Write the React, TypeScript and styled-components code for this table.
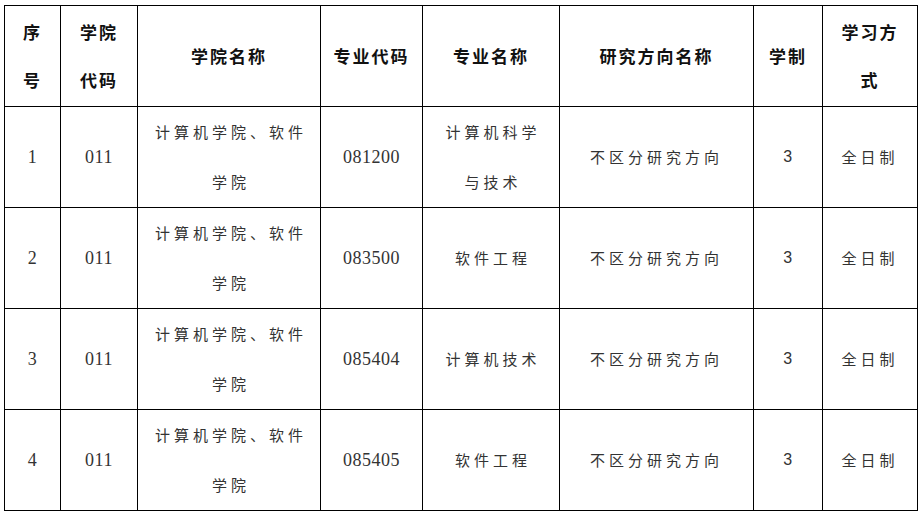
import React from 'react'
import styled, { createGlobalStyle } from 'styled-components';

const GlobalStyle = createGlobalStyle`
    html, body {
        margin: 0;
        padding: 0;
        background: #ffffff;
    }
`

type rowType = {
    no: string;
    code: string;
    college: string[];
    majorCode: string;
    major: string[];
    direction: string;
    years: string;
    mode: string;
}

const columns: { title: string[]; width: number }[] = [
    { title: ["序", "号"], width: 56 },
    { title: ["学院", "代码"], width: 77 },
    { title: ["学院名称"], width: 183 },
    { title: ["专业代码"], width: 102 },
    { title: ["专业名称"], width: 137 },
    { title: ["研究方向名称"], width: 194 },
    { title: ["学制"], width: 69 },
    { title: ["学习方", "式"], width: 95 },
]

const rows: rowType[] = [
    { no: "1", code: "011", college: ["计算机学院、软件", "学院"], majorCode: "081200", major: ["计算机科学", "与技术"], direction: "不区分研究方向", years: "3", mode: "全日制" },
    { no: "2", code: "011", college: ["计算机学院、软件", "学院"], majorCode: "083500", major: ["软件工程"], direction: "不区分研究方向", years: "3", mode: "全日制" },
    { no: "3", code: "011", college: ["计算机学院、软件", "学院"], majorCode: "085404", major: ["计算机技术"], direction: "不区分研究方向", years: "3", mode: "全日制" },
    { no: "4", code: "011", college: ["计算机学院、软件", "学院"], majorCode: "085405", major: ["软件工程"], direction: "不区分研究方向", years: "3", mode: "全日制" },
]

const Lines = ({ lines }: { lines: string[] }) => (
    <>
        {lines.map((l, i) => <Line key={i}>{l}</Line>)}
    </>
)

const App = () => {
    return (<>
        <GlobalStyle />
        <Page>
            <Table>
                <colgroup>
                    {columns.map((c, i) => <Col key={i} $w={c.width} />)}
                </colgroup>
                <thead>
                    <tr>
                        {columns.map((c, i) => (
                            <HeadCell key={i}><Lines lines={c.title} /></HeadCell>
                        ))}
                    </tr>
                </thead>
                <tbody>
                    {rows.map((r) => (
                        <tr key={r.no}>
                            <Cell $kind="digit">{r.no}</Cell>
                            <Cell $kind="digit">{r.code}</Cell>
                            <Cell><Lines lines={r.college} /></Cell>
                            <Cell $kind="digit">{r.majorCode}</Cell>
                            <Cell><Lines lines={r.major} /></Cell>
                            <Cell>{r.direction}</Cell>
                            <Cell $kind="sans">{r.years}</Cell>
                            <Cell>{r.mode}</Cell>
                        </tr>
                    ))}
                </tbody>
            </Table>
        </Page>
    </>
    )
}

export default App;


const Page = styled.div`
    padding: 5px 4px;
    width: 913px;
`

const Table = styled.table`
    border-collapse: collapse;
    table-layout: fixed;
    width: 913px;
`

const Col = styled.col<{ $w: number }>`
    width: ${({ $w }) => $w}px;
`

const Line = styled.span`
    display: block;
`

const HeadCell = styled.th`
    border: 1px solid #000;
    height: 100px;
    padding: 0;
    text-align: center;
    vertical-align: middle;
    font-family: "Noto Sans CJK SC", sans-serif;
    font-size: 17px;
    font-weight: 700;
    letter-spacing: 2px;
    line-height: 48px;
    color: #111;
`

type cellProp = {
    $kind?: "digit" | "sans"
}

const Cell = styled.td<cellProp>`
    border: 1px solid #000;
    height: 100px;
    padding: 0;
    text-align: center;
    vertical-align: middle;
    font-family: ${({ $kind }) =>
        $kind === "digit" ? `"Liberation Serif", serif`
            : $kind === "sans" ? `"Liberation Sans", sans-serif`
                : `"Noto Sans CJK SC", sans-serif`};
    font-size: ${({ $kind }) => $kind === "digit" ? "18px" : $kind === "sans" ? "16px" : "15px"};
    letter-spacing: ${({ $kind }) => $kind ? "0.5px" : "4px"};
    line-height: ${({ $kind }) => $kind ? "54px" : "50px"};
    color: #333;
    ${Line} {
        margin-right: -4px;
    }
`
